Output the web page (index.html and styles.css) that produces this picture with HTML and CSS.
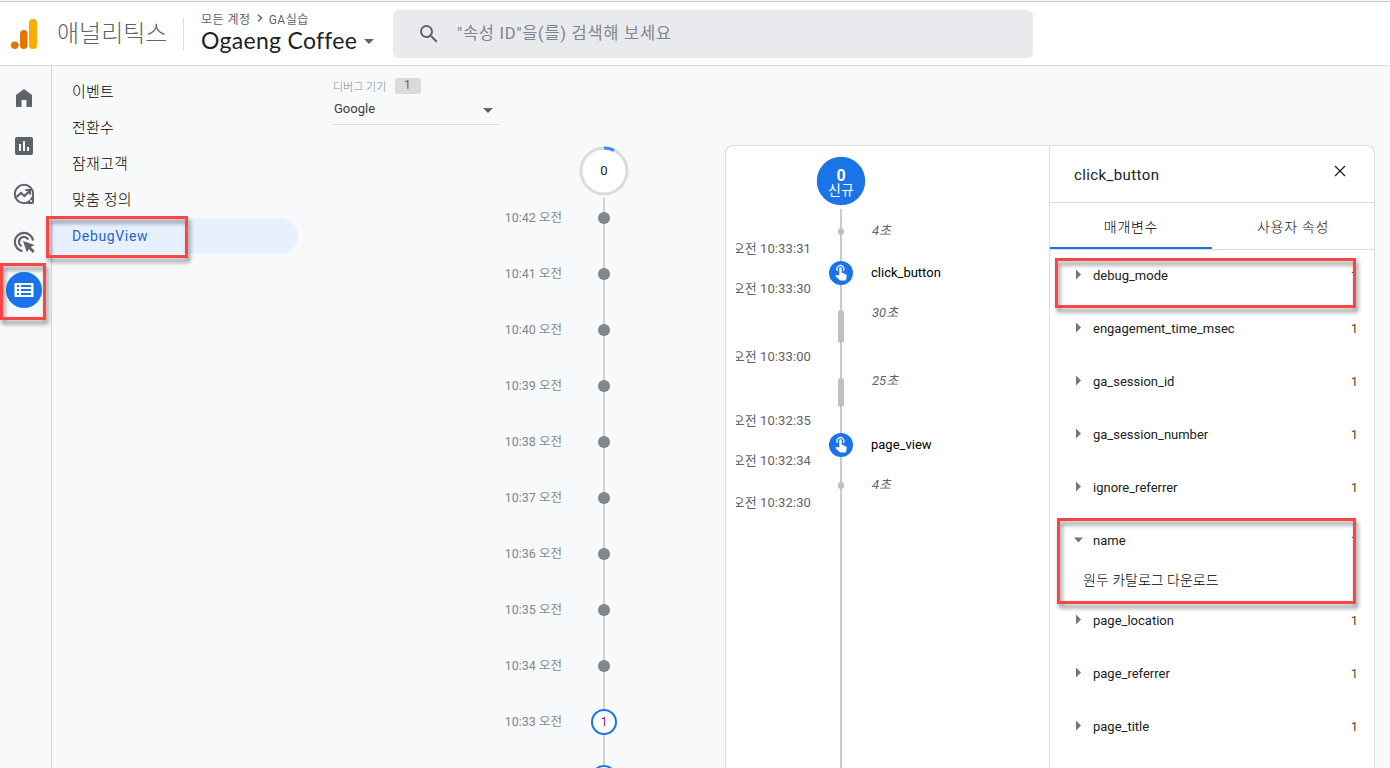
FILE: index.html
```html
<!DOCTYPE html>
<html lang="ko">
<head>
    <meta charset="UTF-8">
    <meta name="viewport" content="width=device-width, initial-scale=1.0">
    <title>애널리틱스 | DebugView</title>
    <link rel="stylesheet" href="styles.css">
</head>
<body>
    <header class="header">
        <svg class="logo" width="26" height="30" viewBox="0 0 26 30">
            <rect x="18" y="0" width="8" height="30" rx="4" fill="#f9ab00"/>
            <rect x="9" y="11" width="7.6" height="19" rx="3.8" fill="#e37400"/>
            <circle cx="3.8" cy="26.2" r="3.8" fill="#e37400"/>
        </svg>
        <span class="product">애널리틱스</span>
        <div class="account">
            <div class="account-path">모든 계정
                <svg width="6" height="8" viewBox="0 0 6 8"><path d="M1 .7L4.5 4 1 7.3" fill="none" stroke="#5f6368" stroke-width="1.5"/></svg>
                GA실습</div>
            <div class="account-name"><span>Ogaeng Coffee</span><i class="caret"></i></div>
        </div>
        <div class="search">
            <svg width="24" height="24" viewBox="0 0 24 24"><path fill="#5f6368" d="M15.5 14h-.79l-.28-.27A6.47 6.47 0 0 0 16 9.5 6.5 6.5 0 1 0 9.5 16c1.61 0 3.09-.59 4.23-1.57l.27.28v.79l5 4.99L20.49 19l-4.99-5zm-6 0C7.01 14 5 11.99 5 9.5S7.01 5 9.5 5 14 7.01 14 9.5 11.99 14 9.5 14z"/></svg>
            <span>"속성 ID"을(를) 검색해 보세요</span>
        </div>
    </header>

    <div class="main">
        <nav class="rail">
            <a class="rail-item"><svg width="24" height="24" viewBox="0 0 24 24"><path fill="#5f6368" d="M12 3l8 6v12h-5.5v-7h-5v7H4V9z"/></svg></a>
            <a class="rail-item"><svg width="24" height="24" viewBox="0 0 24 24"><path fill="#5f6368" d="M19 3H5a2 2 0 0 0-2 2v14c0 1.100.9 2 2 2h14a2 2 0 0 0 2-2V5a2 2 0 0 0-2-2zM9 17H7v-7h2v7zm4 0h-2V7h2v10zm4 0h-2v-4h2v4z"/></svg></a>
            <a class="rail-item">
                <svg width="24" height="24" viewBox="0 0 24 24">
                    <circle cx="12" cy="12" r="9.2" fill="none" stroke="#5f6368" stroke-width="2"/>
                    <path d="M4.500 15l4.500-4 3.500 3L18 8.500M13.500 8H18v4.500" fill="none" stroke="#5f6368" stroke-width="2.200"/>
                    <path d="M22 13v7a2 2 0 0 1-2 2h-6z" fill="#5f6368"/>
                    <circle cx="19" cy="19" r="1.100" fill="#f8f9fb"/>
                </svg>
            </a>
            <a class="rail-item">
                <svg width="24" height="24" viewBox="0 0 24 24">
                    <path d="M10.500 21.100A9.200 9.200 0 1 1 21.100 10.500M9.500 16.300A5 5 0 1 1 16.300 9.500" fill="none" stroke="#5f6368" stroke-width="2.200"/>
                    <path d="M11 11l11.500 4-3.700 1.900 4 4-2 2-4-4-1.900 3.600z" fill="#5f6368"/>
                </svg>
            </a>
            <a class="rail-item active">
                <svg width="20" height="16" viewBox="0 0 20 16">
                    <rect x=".5" y="1" width="19" height="14" fill="#fff"/>
                    <path d="M3 3h2v2H3zM3 7h2v2H3zM3 11h2v2H3zM7 3h10v2H7zM7 7h10v2H7zM7 11h10v2H7z" fill="#1a73e8"/>
                </svg>
            </a>
        </nav>

        <nav class="menu">
            <a class="menu-item">이벤트</a>
            <a class="menu-item">전환수</a>
            <a class="menu-item">잠재고객</a>
            <a class="menu-item">맞춤 정의</a>
            <a class="menu-item selected">DebugView</a>
        </nav>

        <section class="minutes">
            <div class="device">
                <div class="device-title">디버그 기기 <span class="device-count">1</span></div>
                <div class="device-select"><span>Google</span><i class="caret"></i></div>
            </div>
            <div class="minutes-top">
                <svg width="50" height="50" viewBox="0 0 50 50">
                    <circle cx="25" cy="25" r="23" fill="#fff" stroke="#dadcdc" stroke-width="3"/>
                    <path d="M25 2a23 23 0 0 1 10 2.300" fill="none" stroke="#4285f4" stroke-width="3"/>
                </svg>
                <span>0</span>
            </div>
            <div class="minute"><span class="minute-time">10:42 오전</span><span class="minute-track"><i class="dot"></i></span></div>
            <div class="minute"><span class="minute-time">10:41 오전</span><span class="minute-track"><i class="dot"></i></span></div>
            <div class="minute"><span class="minute-time">10:40 오전</span><span class="minute-track"><i class="dot"></i></span></div>
            <div class="minute"><span class="minute-time">10:39 오전</span><span class="minute-track"><i class="dot"></i></span></div>
            <div class="minute"><span class="minute-time">10:38 오전</span><span class="minute-track"><i class="dot"></i></span></div>
            <div class="minute"><span class="minute-time">10:37 오전</span><span class="minute-track"><i class="dot"></i></span></div>
            <div class="minute"><span class="minute-time">10:36 오전</span><span class="minute-track"><i class="dot"></i></span></div>
            <div class="minute"><span class="minute-time">10:35 오전</span><span class="minute-track"><i class="dot"></i></span></div>
            <div class="minute"><span class="minute-time">10:34 오전</span><span class="minute-track"><i class="dot"></i></span></div>
            <div class="minute"><span class="minute-time">10:33 오전</span><span class="minute-track"><b class="count">1</b></span></div>
            <div class="minute"><span class="minute-time"></span><span class="minute-track"><b class="count"></b></span></div>
        </section>

        <div class="card">
            <section class="seconds">
                <div class="seconds-top"><b>0</b><span>신규</span></div>
                <div class="step first">
                    <span class="step-time">오전 10:33:31</span>
                    <span class="step-track"><i class="bar"></i></span>
                    <em class="step-gap">4초</em>
                </div>
                <div class="step">
                    <span class="step-time">오전 10:33:30</span>
                    <span class="step-track event"><svg width="24" height="24" viewBox="0 0 24 24"><circle cx="12" cy="12" r="12" fill="#1a73e8"/><path d="M8.700 9.900A3.400 3.400 0 1 1 14.100 9.900" fill="none" stroke="#fff" stroke-width="1.200"/><path fill="#fff" d="M10.200 7.300a1.200 1.200 0 0 1 2.400 0v4.500h.8l3.600 1.700c.6.300.8.800.7 1.400l-.6 3.500c-.1.700-.6 1.100-1.200 1.100h-4.300c-.4 0-.8-.2-1.100-.5L6.300 14.900l.7-.7c.2-.2.500-.3.800-.2l2.400.6z"/></svg></span>
                    <span class="step-name">click_button</span>
                </div>
                <div class="step long">
                    <span class="step-time">오전 10:33:00</span>
                    <span class="step-track"><i class="bar"></i></span>
                    <em class="step-gap">30초</em>
                </div>
                <div class="step medium">
                    <span class="step-time">오전 10:32:35</span>
                    <span class="step-track"><i class="bar"></i></span>
                    <em class="step-gap">25초</em>
                </div>
                <div class="step">
                    <span class="step-time">오전 10:32:34</span>
                    <span class="step-track event"><svg width="24" height="24" viewBox="0 0 24 24"><circle cx="12" cy="12" r="12" fill="#1a73e8"/><path d="M8.700 9.900A3.400 3.400 0 1 1 14.100 9.900" fill="none" stroke="#fff" stroke-width="1.200"/><path fill="#fff" d="M10.200 7.300a1.200 1.200 0 0 1 2.400 0v4.500h.8l3.600 1.700c.6.300.8.800.7 1.400l-.6 3.500c-.1.700-.6 1.100-1.200 1.100h-4.300c-.4 0-.8-.2-1.100-.5L6.300 14.900l.7-.7c.2-.2.500-.3.800-.2l2.400.6z"/></svg></span>
                    <span class="step-name">page_view</span>
                </div>
                <div class="step last">
                    <span class="step-time">오전 10:32:30</span>
                    <span class="step-track"><i class="bar"></i></span>
                    <em class="step-gap">4초</em>
                </div>
                <div class="step rest"><span></span><span class="step-track"></span></div>
            </section>

            <section class="detail">
                <div class="detail-head">
                    <span>click_button</span>
                    <svg width="12" height="12" viewBox="0 0 12 12"><path d="M1 1l10 10M11 1L1 11" stroke="#202124" stroke-width="1.300"/></svg>
                </div>
                <div class="tabs">
                    <div class="tab current">매개변수</div>
                    <div class="tab">사용자 속성</div>
                </div>
                <div class="param"><i class="arrow"></i><span>debug_mode</span><b>1</b></div>
                <div class="param"><i class="arrow"></i><span>engagement_time_msec</span><b>1</b></div>
                <div class="param"><i class="arrow"></i><span>ga_session_id</span><b>1</b></div>
                <div class="param"><i class="arrow"></i><span>ga_session_number</span><b>1</b></div>
                <div class="param"><i class="arrow"></i><span>ignore_referrer</span><b>1</b></div>
                <div class="param"><i class="arrow open"></i><span>name</span><b>1</b></div>
                <div class="param-value">원두 카탈로그 다운로드</div>
                <div class="param"><i class="arrow"></i><span>page_location</span><b>1</b></div>
                <div class="param"><i class="arrow"></i><span>page_referrer</span><b>1</b></div>
                <div class="param"><i class="arrow"></i><span>page_title</span><b>1</b></div>
            </section>
        </div>
    </div>

    <!-- highlight boxes -->
    <div class="mark mark-menu"></div>
    <div class="mark mark-rail"></div>
    <div class="mark mark-debug"></div>
    <div class="mark mark-name"></div>
</body>
</html>
```
FILE: styles.css
```css
* {
    box-sizing: border-box;
}
body {
    margin: 0;
    height: 768px;
    overflow: hidden;
    position: relative;
    display: flex;
    flex-direction: column;
    background-color: #f8f9fb;
    color: #202124;
    font-family: Roboto, "Noto Sans CJK KR", sans-serif;
    font-size: 13px;
}
svg {
    display: block;
    flex: none;
}
.header {
    flex: none;
    display: flex;
    margin-top: 1px;
    height: 65px;
    background-color: #fff;
    border-top: 1px solid #c8c9cb;
    border-bottom: 1px solid #dadce0;
    padding-left: 11px;
}
.logo {
    margin-top: 17px;
}
.product {
    width: 125px;
    padding-left: 20px;
    font-size: 24px;
    font-weight: 300;
    line-height: 64px;
    color: #5f6368;
    white-space: nowrap;
}
.account {
    width: 210px;
    height: 32px;
    margin: 16px 0 0 21px;
    padding-left: 17px;
    border-left: 1px solid #dadce0;
}
.account-path {
    display: flex;
    align-items: center;
    gap: 6px;
    height: 16px;
    margin-top: -8px;
    font-size: 12px;
    letter-spacing: 0.5px;
    color: #5f6368;
}
.account-name {
    display: flex;
    align-items: center;
    gap: 6px;
    height: 28px;
    font-family: Lato, Roboto, sans-serif;
    font-size: 23px;
    white-space: nowrap;
}
.account-name span {
    width: 157px;
    letter-spacing: 0.3px;
}
.account-name .caret {
    margin-top: 3px;
}
.caret {
    flex: none;
    border: 5px solid transparent;
    border-top-color: #5f6368;
    border-bottom: 0;
}
.search {
    display: flex;
    align-items: center;
    width: 640px;
    height: 48px;
    margin-top: 8px;
    padding: 0 0 1px 24px;
    gap: 16px;
    border-radius: 6px;
    background-color: #e8eaed;
    font-size: 16.5px;
    letter-spacing: 0.7px;
    line-height: 22px;
    color: #80868b;
}
.main {
    flex: 1;
    min-height: 0;
    overflow: hidden;
    display: flex;
}
.rail {
    flex: none;
    width: 52px;
    padding: 14px 0 0 6px;
    display: flex;
    flex-direction: column;
    gap: 12px;
    border-right: 1px solid #d3d5d8;
}
.rail-item {
    width: 36px;
    height: 36px;
    display: flex;
    align-items: center;
    justify-content: center;
    border-radius: 50%;
}
.rail-item.active {
    background-color: #1a73e8;
}
.menu {
    flex: none;
    width: 246px;
    padding-top: 8px;
}
.menu-item {
    display: block;
    height: 36px;
    padding-left: 20px;
    font-size: 15px;
    font-weight: 300;
    letter-spacing: 0.2px;
    line-height: 37px;
    color: #000;
}
.menu-item.selected {
    border-radius: 0 18px 18px 0;
    background-color: #e8f0fe;
    color: #1967d2;
    font-size: 14px;
    font-weight: 400;
    letter-spacing: 0.65px;
}
.minutes {
    flex: none;
    width: 427px;
    padding-top: 12px;
}
.device {
    width: 166px;
    height: 48px;
    margin-left: 35px;
}
.device-title {
    display: flex;
    align-items: center;
    gap: 9px;
    height: 16px;
    font-size: 11px;
    font-weight: 300;
    color: #80868b;
}
.device-count {
    width: 26px;
    height: 16px;
    border-radius: 3px;
    background-color: #dadada;
    color: #5f6368;
    font-size: 12px;
    font-weight: 400;
    line-height: 15px;
    padding-right: 2px;
    text-align: center;
}
.device-select {
    display: flex;
    align-items: center;
    justify-content: space-between;
    height: 31px;
    padding: 0 6px 1px 1px;
    border-bottom: 1px solid #dadce0;
    color: #3c4043;
}
.device-select span {
    margin-top: -1px;
}
.device-select .caret {
    margin-top: 3px;
}
.minutes-top {
    display: grid;
    place-items: center;
    width: 50px;
    height: 50px;
    margin: 20px 0 2px 281px;
}
.minutes-top > * {
    grid-area: 1 / 1;
}
.minutes-top span {
    margin-top: -2px;
}
.minute {
    display: flex;
    height: 56px;
}
.minute-time {
    width: 264px;
    line-height: 39px;
    text-align: right;
    font-size: 12.5px;
    color: #80868b;
}
.minute-track {
    display: flex;
    justify-content: center;
    align-items: flex-start;
    width: 26px;
    margin-left: 29px;
    background: linear-gradient(#d0d2d4, #d0d2d4) center / 2px 100% no-repeat;
}
.dot {
    width: 12px;
    height: 12px;
    margin-top: 14px;
    border-radius: 50%;
    background-color: #80868b;
}
.count {
    width: 26px;
    height: 26px;
    margin-top: 7px;
    border: 2px solid #1a73e8;
    border-radius: 50%;
    background-color: #fff;
    color: #7b1080;
    font-size: 12px;
    font-weight: 400;
    line-height: 22px;
    text-align: center;
}
.card {
    width: 650px;
    margin-top: 79px;
    display: flex;
    border: 1px solid #dadce0;
    border-bottom: 0;
    border-radius: 8px 8px 0 0;
    background-color: #fff;
}
.seconds {
    width: 323px;
    padding-top: 10px;
    display: flex;
    flex-direction: column;
}
.seconds-top {
    flex: none;
    display: flex;
    flex-direction: column;
    align-items: center;
    width: 48px;
    height: 48px;
    margin: 1px 0 1px 91px;
    padding-top: 11px;
    border-radius: 50%;
    background-color: #1a73e8;
    box-shadow: 0 0 1px #5f6368;
    color: #fff;
    font-size: 14px;
    line-height: 15px;
}
.seconds-top b {
    font-size: 16px;
}
.step {
    flex: none;
    display: grid;
    grid-template-columns: 75px 24px 1fr;
    column-gap: 18px;
    height: 40px;
    padding-left: 10px;
}
.step.first,
.step.last {
    height: 42px;
}
.step.long {
    height: 68px;
}
.step.medium {
    height: 64px;
}
.step.rest {
    flex: 1;
}
/* the time belongs to the lower edge of its step */
.step-time {
    display: flex;
    justify-content: flex-end;
    align-self: end;
    height: 20px;
    margin-bottom: -11px;
    overflow: hidden;
    line-height: 20px;
    letter-spacing: 0.1px;
    white-space: nowrap;
    color: #5f6368;
}
.step-track {
    display: flex;
    justify-content: center;
    align-items: stretch;
    padding: 22px 0 13px;
    background: linear-gradient(#c8cacc, #c8cacc) center / 2px 100% no-repeat;
}
.first .step-track {
    background-position: center 3px;
    background-size: 2px 39px;
}
.step-track.event {
    padding: 13px 0 0;
    align-items: flex-start;
}
.bar {
    width: 6px;
    min-height: 6px;
    border-radius: 3px;
    background-color: #bdc1c6;
}
.step-gap {
    padding-top: 15px;
    line-height: 20px;
    margin-left: 1px;
    color: #5f6368;
}
.step-name {
    padding-top: 15px;
    line-height: 20px;
    color: #000;
}
.detail {
    flex: 1;
    border-left: 1px solid #dadce0;
}
.detail-head {
    display: flex;
    justify-content: space-between;
    height: 57px;
    padding: 19px 28px 0 24px;
    border-bottom: 1px solid #dadce0;
    font-size: 15px;
    letter-spacing: 0.4px;
    line-height: 20px;
}
.tabs {
    display: flex;
    height: 47px;
    border-bottom: 1px solid #dadce0;
}
.tab {
    flex: 1;
    height: 46px;
    font-size: 14px;
    font-weight: 300;
    letter-spacing: 0.7px;
    line-height: 48px;
    text-align: center;
    color: #202124;
}
.tab.current {
    border-bottom: 2px solid #1a73e8;
    color: #000;
}
.param {
    display: flex;
    align-items: center;
    height: 53px;
    padding: 0 16px 0 24px;
}
.param span {
    flex: 1;
    padding-left: 10px;
    margin-bottom: 2px;
}
.param b {
    margin-bottom: 2px;
    font-weight: 400;
    color: #5f4a20;
}
.arrow {
    width: 9px;
    height: 10px;
    margin-bottom: 4px;
    background-color: #757575;
    clip-path: polygon(2px 0, 7px 5px, 2px 10px);
}
.arrow.open {
    clip-path: polygon(0 3px, 9px 3px, 4.5px 8px);
}
.param-value {
    height: 27px;
    padding-left: 33px;
    font-size: 14px;
    font-weight: 300;
    line-height: 24px;
    color: #000;
}
.mark {
    position: absolute;
    border: 3px solid #fb4545;
    filter: drop-shadow(2px 4px 2px rgba(0, 0, 0, 0.45));
}
.mark-menu {
    left: 46px;
    top: 216px;
    width: 142px;
    height: 42px;
}
.mark-rail {
    left: 0;
    top: 263px;
    width: 46px;
    height: 57px;
}
.mark-debug {
    left: 1055px;
    top: 258px;
    width: 301px;
    height: 50px;
}
.mark-name {
    left: 1057px;
    top: 518px;
    width: 299px;
    height: 86px;
}
```
